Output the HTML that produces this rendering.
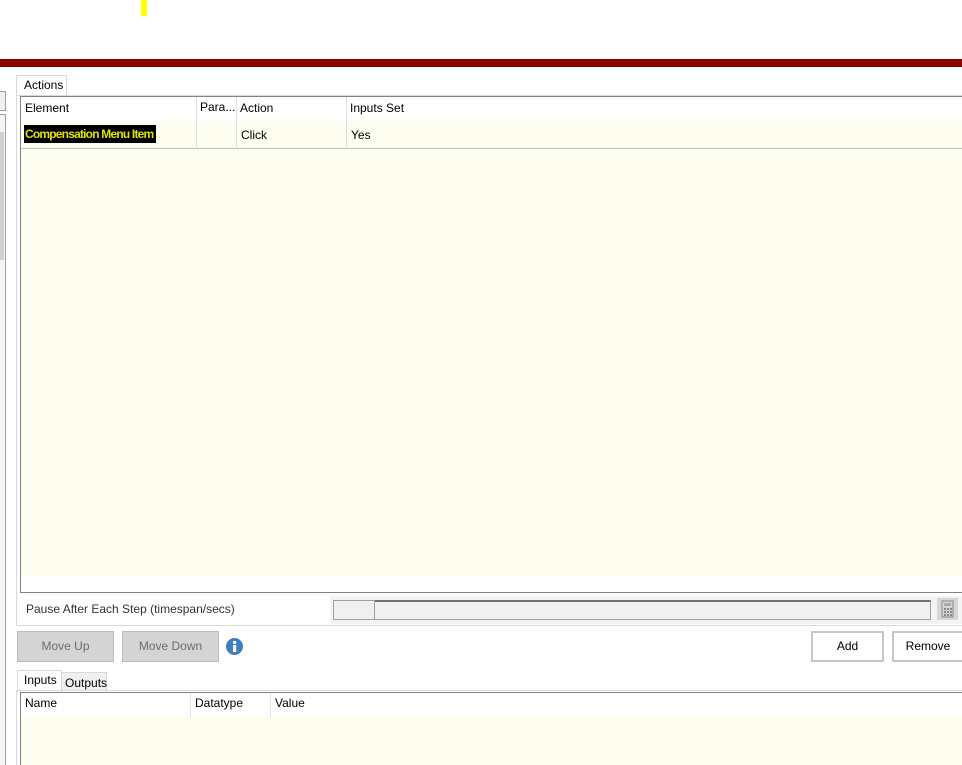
<!DOCTYPE html>
<html style="overflow:hidden;height:765px"><head><style>
body{margin:0;width:962px;height:765px;background:#fff;position:relative;overflow:hidden;font-family:"Liberation Sans",sans-serif;font-size:12px;color:#000}
.a{position:absolute;box-sizing:border-box}
.t{position:absolute;white-space:nowrap}
</style></head><body>
<div class="a" style="left:141px;top:0;width:6px;height:16px;background:#ffff00"></div>
<div class="a" style="left:0;top:59px;width:962px;height:8px;background:#8b0000"></div>
<div class="a" style="left:0;top:91px;width:6px;height:20px;border:1px solid #a0a0a0;border-left:none;background:#f0f0f0"></div>
<div class="a" style="left:0;top:114px;width:6px;height:651px;border:1px solid #a0a0a0;border-left:none;border-bottom:none;background:#f4f4f4"></div>
<div class="a" style="left:0;top:132px;width:4px;height:128px;background:#d0d0d0"></div>
<div class="a" style="left:16px;top:75px;width:51px;height:22px;border:1px solid #d9d9d9;border-bottom:none;background:#fff"></div>
<div class="t" style="left:24px;top:78px">Actions</div>
<div class="a" style="left:16px;top:95px;width:950px;height:531px;border:1px solid #d9d9d9"></div>
<div class="a" style="left:20px;top:96px;width:944px;height:497px;border:1px solid #828282;background:#fff"></div>
<div class="a" style="left:21px;top:121px;width:942px;height:456px;background:#fefef0"></div>
<div class="a" style="left:21px;top:148px;width:942px;height:1px;background:#c0c0c0"></div>
<div class="a" style="left:196px;top:97px;width:1px;height:52px;background:#e0e0e0"></div>
<div class="a" style="left:236px;top:97px;width:1px;height:52px;background:#e0e0e0"></div>
<div class="a" style="left:346px;top:97px;width:1px;height:52px;background:#e0e0e0"></div>
<div class="t" style="left:25px;top:101px">Element</div>
<div class="t" style="left:200px;top:100px">Para...</div>
<div class="t" style="left:240px;top:101px">Action</div>
<div class="t" style="left:350px;top:101px">Inputs Set</div>
<div class="t" style="left:24px;top:125px;width:131px;height:18px;background:#000;color:#e0e000;line-height:18px;font-size:12px;font-weight:bold;letter-spacing:-0.8px;padding-left:1px;overflow:hidden">Compensation Menu Item</div>
<div class="t" style="left:241px;top:128px">Click</div>
<div class="t" style="left:351px;top:128px">Yes</div>
<div class="t" style="left:26px;top:602px;color:#333">Pause After Each Step (timespan/secs)</div>
<div class="a" style="left:330px;top:596px;width:632px;height:28px;background:#f4f4f4"></div>
<div class="a" style="left:333px;top:600px;width:598px;height:20px;border:1px solid #a0a0a0;border-top:2px solid #707070;background:#f0f0f0"></div>
<div class="a" style="left:333px;top:600px;width:42px;height:20px;border:1px solid #a0a0a0;background:#f0f0f0"></div>
<div class="a" style="left:937px;top:598px;width:21px;height:22px;background:#d6d6d6"></div>
<svg class="a" style="left:940px;top:600px" width="15" height="18"><rect x="2" y="1" width="11" height="16" fill="none" stroke="#888"/><rect x="4" y="3" width="7" height="3" fill="#aaa"/><g fill="#888"><rect x="4" y="8" width="2" height="2"/><rect x="7" y="8" width="2" height="2"/><rect x="10" y="8" width="2" height="2"/><rect x="4" y="11" width="2" height="2"/><rect x="7" y="11" width="2" height="2"/><rect x="10" y="11" width="2" height="2"/><rect x="4" y="14" width="2" height="2"/><rect x="7" y="14" width="2" height="2"/><rect x="10" y="14" width="2" height="2"/></g></svg>
<div class="a" style="left:17px;top:631px;width:97px;height:31px;border:1px solid #bcbcbc;background:#d4d4d4;color:#6d6d6d;text-align:center;line-height:29px">Move Up</div>
<div class="a" style="left:122px;top:631px;width:97px;height:31px;border:1px solid #bcbcbc;background:#d4d4d4;color:#6d6d6d;text-align:center;line-height:29px">Move Down</div>
<svg class="a" style="left:226px;top:638px" width="17" height="17"><circle cx="8.5" cy="8.5" r="8.5" fill="#3f7fc0"/><rect x="7" y="7" width="3.2" height="7" fill="#fff"/><circle cx="8.6" cy="4.4" r="1.7" fill="#fff"/></svg>
<div class="a" style="left:811px;top:631px;width:73px;height:31px;border:2px solid #c8c8c8;background:#fff;text-align:center;line-height:27px">Add</div>
<div class="a" style="left:892px;top:631px;width:72px;height:31px;border:2px solid #c8c8c8;background:#fff;text-align:center;line-height:27px">Remove</div>
<div class="a" style="left:61px;top:672px;width:46px;height:19px;border:1px solid #d9d9d9;background:#f0f0f0"></div>
<div class="t" style="left:65px;top:676px">Outputs</div>
<div class="a" style="left:17px;top:670px;width:45px;height:22px;border:1px solid #d9d9d9;border-bottom:none;background:#fff"></div>
<div class="t" style="left:24px;top:673px">Inputs</div>
<div class="a" style="left:16px;top:690px;width:950px;height:75px;border:1px solid #d9d9d9;border-bottom:none"></div>
<div class="a" style="left:20px;top:692px;width:944px;height:73px;border:1px solid #828282;border-bottom:none;background:#fff"></div>
<div class="a" style="left:21px;top:717px;width:942px;height:48px;background:#fefef0"></div>
<div class="a" style="left:190px;top:693px;width:1px;height:24px;background:#e0e0e0"></div>
<div class="a" style="left:270px;top:693px;width:1px;height:24px;background:#e0e0e0"></div>
<div class="t" style="left:25px;top:696px">Name</div>
<div class="t" style="left:195px;top:696px">Datatype</div>
<div class="t" style="left:275px;top:696px">Value</div>
</body></html>
